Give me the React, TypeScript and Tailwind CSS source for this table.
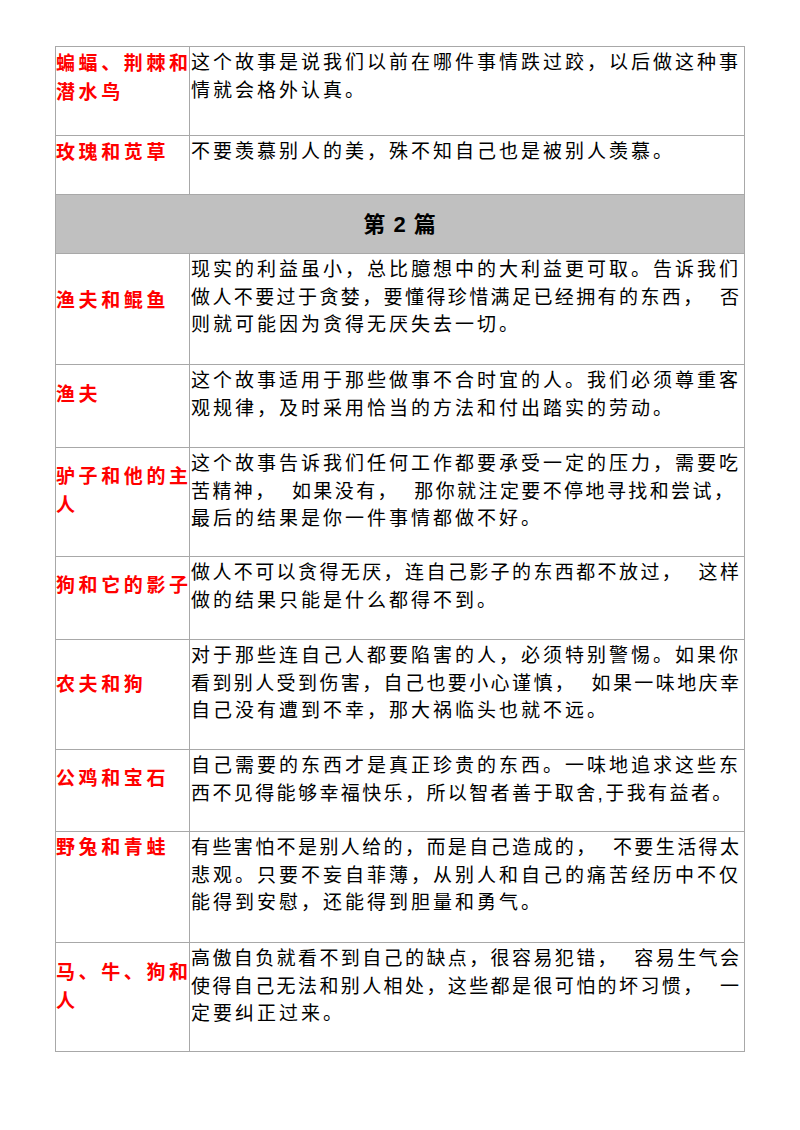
import React from "react";

type Row = {
  label: string[];
  text: string[];
  h: string;
  lpt: string;
};

const rows1: Row[] = [
  {
    label: ["蝙蝠、荆棘和", "潜水鸟"],
    text: ["这个故事是说我们以前在哪件事情跌过跤，以后做这种事", "情就会格外认真。"],
    h: "h-[89px]",
    lpt: "pt-[2px]",
  },
  {
    label: ["玫瑰和苋草"],
    text: ["不要羡慕别人的美，殊不知自己也是被别人羡慕。"],
    h: "h-[59px]",
    lpt: "pt-[2px]",
  },
];

const rows2: Row[] = [
  {
    label: ["渔夫和鲲鱼"],
    text: [
      "现实的利益虽小，总比臆想中的大利益更可取。告诉我们",
      "做人不要过于贪婪，要懂得珍惜满足已经拥有的东西，  否",
      "则就可能因为贪得无厌失去一切。",
    ],
    h: "h-[111px]",
    lpt: "pt-[32px]",
  },
  {
    label: ["渔夫"],
    text: ["这个故事适用于那些做事不合时宜的人。我们必须尊重客", "观规律，及时采用恰当的方法和付出踏实的劳动。"],
    h: "h-[83px]",
    lpt: "pt-[15px]",
  },
  {
    label: ["驴子和他的主", "人"],
    text: [
      "这个故事告诉我们任何工作都要承受一定的压力，需要吃",
      "苦精神，  如果没有，  那你就注定要不停地寻找和尝试，",
      "最后的结果是你一件事情都做不好。",
    ],
    h: "h-[109px]",
    lpt: "pt-[14px]",
  },
  {
    label: ["狗和它的影子"],
    text: ["做人不可以贪得无厌，连自己影子的东西都不放过，  这样", "做的结果只能是什么都得不到。"],
    h: "h-[83px]",
    lpt: "pt-[14px]",
  },
  {
    label: ["农夫和狗"],
    text: [
      "对于那些连自己人都要陷害的人，必须特别警惕。如果你",
      "看到别人受到伤害，自己也要小心谨慎，  如果一味地庆幸",
      "自己没有遭到不幸，那大祸临头也就不远。",
    ],
    h: "h-[110px]",
    lpt: "pt-[30px]",
  },
  {
    label: ["公鸡和宝石"],
    text: ["自己需要的东西才是真正珍贵的东西。一味地追求这些东", "西不见得能够幸福快乐，所以智者善于取舍,于我有益者。"],
    h: "h-[82px]",
    lpt: "pt-[14px]",
  },
  {
    label: ["野兔和青蛙"],
    text: [
      "有些害怕不是别人给的，而是自己造成的，  不要生活得太",
      "悲观。只要不妄自菲薄，从别人和自己的痛苦经历中不仅",
      "能得到安慰，还能得到胆量和勇气。",
    ],
    h: "h-[111px]",
    lpt: "pt-[1px]",
  },
  {
    label: ["马、牛、狗和", "人"],
    text: [
      "高傲自负就看不到自己的缺点，很容易犯错，  容易生气会",
      "使得自己无法和别人相处，这些都是很可怕的坏习惯，  一",
      "定要纠正过来。",
    ],
    h: "h-[109px]",
    lpt: "pt-[15px]",
  },
];

const font = "font-['Liberation_Sans','Noto_Sans_CJK_SC',sans-serif]";

function TableRow({ row }: { row: Row }) {
  return (
    <div className={`grid grid-cols-[134px_1fr] border-b border-[#a8a8a8] ${row.h}`}>
      <div className={`border-r border-[#a8a8a8] ${row.lpt}`}>
        {row.label.map((l, i) => (
          <div
            key={i}
            className="whitespace-nowrap text-[19px] leading-[29px] font-bold tracking-[3.6px] text-[#ff0000]"
          >
            {l}
          </div>
        ))}
      </div>
      <div className="pt-[2px] pl-[1px] overflow-hidden">
        {row.text.map((t, i) => (
          <div
            key={i}
            className={`whitespace-pre text-[19px] leading-[27.5px] text-black ${
              t.length > 25 ? "tracking-[2.4px]" : "tracking-[3px]"
            }`}
          >
            {t}
          </div>
        ))}
      </div>
    </div>
  );
}

export default function App() {
  return (
    <div className={`w-[800px] h-[1130px] bg-white pt-[46px] ${font}`}>
      <div className="ml-[55px] w-[690px] border-t border-l border-r border-[#a8a8a8]">
        {rows1.map((r, i) => (
          <TableRow key={i} row={r} />
        ))}
        <div className="h-[59px] bg-[#c0c0c0] border-b border-[#a8a8a8] flex items-center justify-center">
          <span className="text-[22px] font-bold tracking-[1px] text-black whitespace-pre">第 2 篇</span>
        </div>
        {rows2.map((r, i) => (
          <TableRow key={i} row={r} />
        ))}
      </div>
    </div>
  );
}
